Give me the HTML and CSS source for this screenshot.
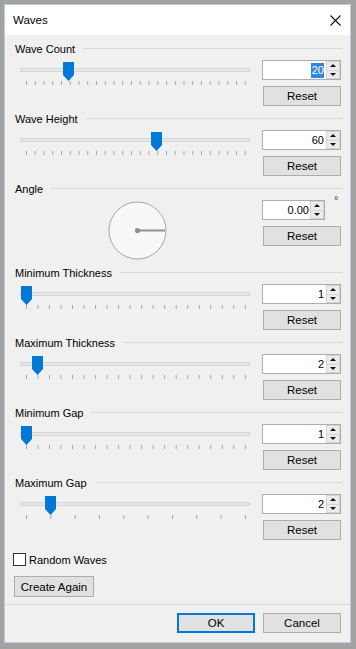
FILE: index.html
```html
<!DOCTYPE html>
<html>
<head>
<meta charset="utf-8">
<title>Waves</title>
<link rel="stylesheet" href="styles.css">
</head>
<body>
<div class="window">
  <div class="titlebar">
    <span class="title">Waves</span>
    <svg class="close" width="11" height="11" viewBox="0 0 11 11"><path d="M0.5 0.5 L10.5 10.5 M10.5 0.5 L0.5 10.5" stroke="#111" stroke-width="1.1" fill="none"/></svg>
  </div>
  <div class="main">
    <section class="group">
      <div class="group-head"><span>Wave Count</span><div class="rule"></div></div>
      <div class="group-body">
        <div class="slider">
          <div class="track"></div>
          <div class="thumb" style="left:43px"></div>
          <div class="ticks" style="--n:25"></div>
        </div>
        <div class="controls">
          <div class="spin"><span class="value"><span class="sel">20</span></span><div class="arrows"><span class="up"></span><span class="down"></span></div></div>
          <button class="btn reset">Reset</button>
        </div>
      </div>
    </section>
    <section class="group">
      <div class="group-head"><span>Wave Height</span><div class="rule"></div></div>
      <div class="group-body">
        <div class="slider">
          <div class="track"></div>
          <div class="thumb" style="left:131px"></div>
          <div class="ticks" style="--n:25"></div>
        </div>
        <div class="controls">
          <div class="spin"><span class="value">60</span><div class="arrows"><span class="up"></span><span class="down"></span></div></div>
          <button class="btn reset">Reset</button>
        </div>
      </div>
    </section>
    <section class="group">
      <div class="group-head"><span>Angle</span><div class="rule"></div></div>
      <div class="group-body angle-body">
        <div class="dial-area">
          <svg class="dial" width="59" height="59" viewBox="0 0 59 59">
            <circle cx="29.5" cy="29.5" r="28.5" fill="#f8f8f8" stroke="#a6a6a6" stroke-width="1"/>
            <line x1="29.5" y1="29.5" x2="57" y2="29.5" stroke="#909090" stroke-width="2"/>
            <circle cx="29.5" cy="29.5" r="2.6" fill="#909090"/>
          </svg>
        </div>
        <div class="controls">
          <div class="spin-row">
            <div class="spin spin-angle"><span class="value">0.00</span><div class="arrows"><span class="up"></span><span class="down"></span></div></div>
            <span class="deg">°</span>
          </div>
          <button class="btn reset">Reset</button>
        </div>
      </div>
    </section>
    <section class="group">
      <div class="group-head"><span>Minimum Thickness</span><div class="rule"></div></div>
      <div class="group-body">
        <div class="slider">
          <div class="track"></div>
          <div class="thumb" style="left:1px"></div>
          <div class="ticks" style="--n:19"></div>
        </div>
        <div class="controls">
          <div class="spin"><span class="value">1</span><div class="arrows"><span class="up"></span><span class="down"></span></div></div>
          <button class="btn reset">Reset</button>
        </div>
      </div>
    </section>
    <section class="group">
      <div class="group-head"><span>Maximum Thickness</span><div class="rule"></div></div>
      <div class="group-body">
        <div class="slider">
          <div class="track"></div>
          <div class="thumb" style="left:12px"></div>
          <div class="ticks" style="--n:19"></div>
        </div>
        <div class="controls">
          <div class="spin"><span class="value">2</span><div class="arrows"><span class="up"></span><span class="down"></span></div></div>
          <button class="btn reset">Reset</button>
        </div>
      </div>
    </section>
    <section class="group">
      <div class="group-head"><span>Minimum Gap</span><div class="rule"></div></div>
      <div class="group-body">
        <div class="slider">
          <div class="track"></div>
          <div class="thumb" style="left:1px"></div>
          <div class="ticks" style="--n:19"></div>
        </div>
        <div class="controls">
          <div class="spin"><span class="value">1</span><div class="arrows"><span class="up"></span><span class="down"></span></div></div>
          <button class="btn reset">Reset</button>
        </div>
      </div>
    </section>
    <section class="group">
      <div class="group-head"><span>Maximum Gap</span><div class="rule"></div></div>
      <div class="group-body">
        <div class="slider">
          <div class="track"></div>
          <div class="thumb" style="left:25px"></div>
          <div class="ticks" style="--n:9"></div>
        </div>
        <div class="controls">
          <div class="spin"><span class="value">2</span><div class="arrows"><span class="up"></span><span class="down"></span></div></div>
          <button class="btn reset">Reset</button>
        </div>
      </div>
    </section>
    <label class="check-row"><span class="checkbox"></span><span class="check-label">Random Waves</span></label>
    <button class="btn create">Create Again</button>
  </div>
  <div class="footer">
    <button class="btn ok">OK</button>
    <button class="btn cancel">Cancel</button>
  </div>
</div>
</body>
</html>
```
FILE: styles.css
```css
* { box-sizing: border-box; }
html, body { margin: 0; padding: 0; }
body {
  width: 356px;
  height: 649px;
  overflow: hidden;
  background: #a2a2a2;
  padding: 4px 5px 6px 4px;
  font-family: "Liberation Sans", Arial, sans-serif;
  font-size: 11px;
  color: #000;
}
.window {
  width: 347px;
  height: 639px;
  border: 1px solid #b9cce4;
  background: #f0f0f0;
  display: flex;
  flex-direction: column;
}
.titlebar {
  flex: none;
  height: 30px;
  background: #fff;
  display: flex;
  align-items: center;
  justify-content: space-between;
  padding: 0 9px 0 8px;
}
.title { font-size: 11.5px; }
.close { display: block; }
.main {
  padding: 7px 7px 0 10px;
  display: flex;
  flex-direction: column;
  align-items: flex-start;
}
.group { width: 100%; }
.group-head {
  height: 14px;
  display: flex;
  align-items: center;
  white-space: nowrap;
}
.rule {
  flex: 1;
  height: 1px;
  background: #dadada;
  margin-left: 8px;
  margin-top: -1px;
}
.group-body {
  display: flex;
  align-items: flex-start;
  margin-top: 4px;
  padding-bottom: 6px;
}
.slider {
  position: relative;
  margin-left: 5px;
  width: 230px;
  height: 25px;
  flex: none;
}
.track {
  margin-top: 8px;
  height: 4px;
  background: #e7e7e7;
  border: 1px solid #d6d6d6;
}
.thumb {
  position: absolute;
  top: 2px;
  width: 11px;
  height: 19px;
  background: #0078d7;
  clip-path: polygon(0 0, 100% 0, 100% 68%, 50% 100%, 0 68%);
}
.ticks {
  margin-left: 6px;
  margin-top: 9px;
  width: 220px;
  height: 4px;
  background-image: linear-gradient(to right, #a4a4a4 1px, transparent 1px);
  background-size: calc(219px / var(--n)) 100%;
  background-repeat: repeat-x;
}
.controls {
  flex: none;
  margin-left: 12px;
  width: 79px;
  display: flex;
  flex-direction: column;
  gap: 6px;
}
.spin {
  width: 79px;
  height: 20px;
  background: #fff;
  border: 1px solid #abadb3;
  display: flex;
}
.spin .value {
  flex: 1;
  text-align: right;
  line-height: 18px;
  padding-right: 2px;
}
.sel {
  background: #3285dc;
  color: #fff;
  display: inline-block;
  line-height: 15px;
  padding: 0 0 0 1px;
}
.arrows {
  width: 14px;
  display: flex;
  flex-direction: column;
}
.arrows span {
  flex: 1;
  background: #ececec;
  border: 1px solid #d4d4d4;
  display: flex;
  align-items: center;
  justify-content: center;
}
.arrows .up { border-bottom-width: 0; }
.arrows .up::after {
  content: "";
  border-left: 3px solid transparent;
  border-right: 3px solid transparent;
  border-bottom: 3px solid #111;
}
.arrows .down::after {
  content: "";
  border-left: 3px solid transparent;
  border-right: 3px solid transparent;
  border-top: 3px solid #111;
}
.btn {
  font-family: inherit;
  font-size: 11.5px;
  color: #000;
  background: #e1e1e1;
  border: 1px solid #adadad;
  padding: 0;
  margin: 0;
  height: 20px;
}
.reset { width: 78px; margin-left: 1px; }
.angle-body { padding-bottom: 6px; }
.dial-area { width: 230px; margin-left: 5px; flex: none; }
.dial { display: block; margin-left: 88px; margin-top: 1px; }
.spin-row { display: flex; align-items: flex-start; }
.spin-angle { width: 63px; }
.spin-angle .value { padding-right: 1px; }
.deg { margin-left: 9px; margin-top: -6px; font-size: 11px; color: #333; }
.check-row {
  margin-top: 7px;
  margin-left: -2px;
  height: 13px;
  display: flex;
  align-items: center;
}
.checkbox {
  width: 13px;
  height: 13px;
  background: #fff;
  border: 1px solid #333;
}
.check-label { margin-left: 3px; }
.create {
  margin-top: 10px;
  margin-left: -1px;
  width: 80px;
  height: 21px;
}
.footer {
  margin-top: 7px;
  border-top: 1px solid #dadada;
  padding: 8px 9px 0 0;
  display: flex;
  justify-content: flex-end;
  gap: 8px;
}
.ok, .cancel { width: 78px; height: 20px; }
.ok { border: 2px solid #0078d7; }
```
